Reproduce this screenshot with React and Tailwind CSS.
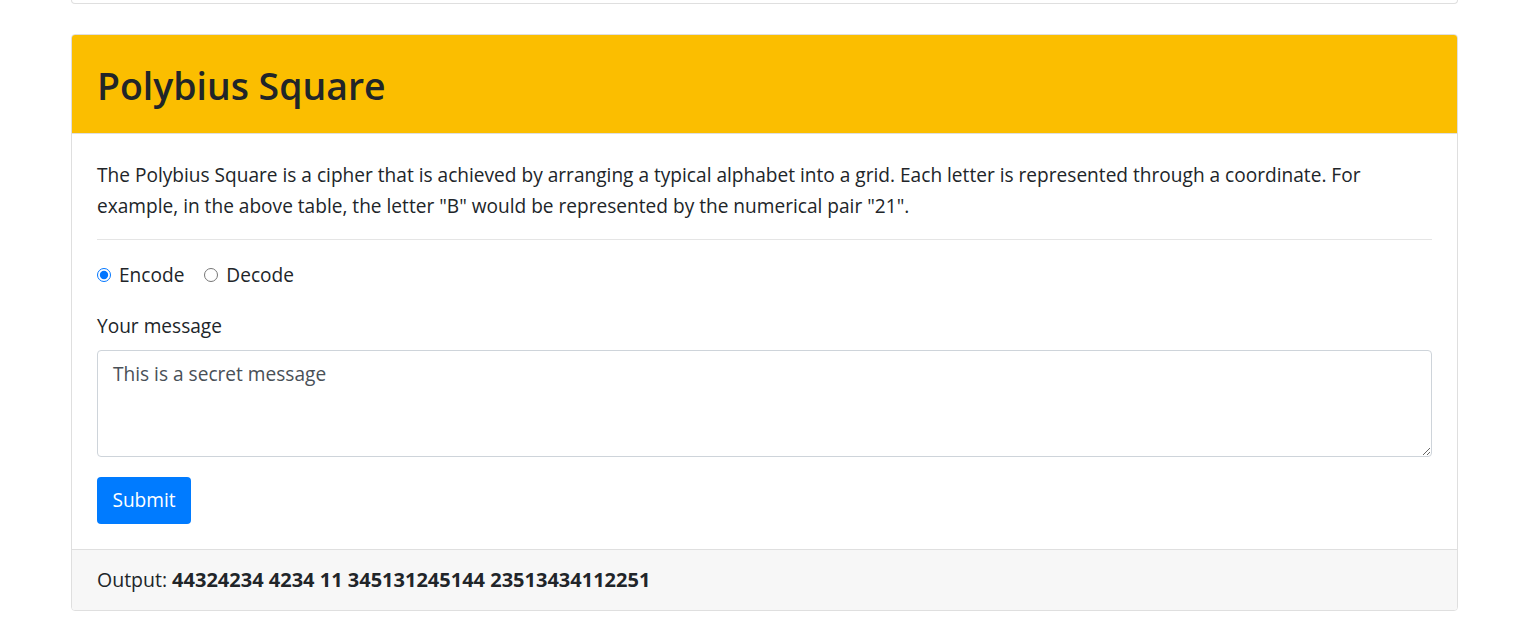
export default function App() {
  return (
    <div
      className="min-h-screen bg-white text-[#212529]"
      style={{ fontFamily: '"Open Sans", "Noto Sans", sans-serif' }}
    >
      <div className="ml-[71px] w-[1387px]">
        {/* tail of the previous card */}
        <div className="h-[4px] border border-t-0 border-[#dfdfdf] rounded-b-[4px]"></div>

        <div className="mt-[30px] border border-[#dfdfdf] rounded-[4px] overflow-hidden">
          <div className="bg-[#fbbe00] border-b border-[#dfdfdf] h-[99px] px-[25px] flex items-center">
            <h1 className="text-[37.4px] leading-[48px] font-semibold text-[#212529] pt-[3px]">
              Polybius Square
            </h1>
          </div>

          <div className="px-[25px] pt-[25px] pb-[25px] text-[19.1px]">
            <p className="leading-[31px] pt-[1px]">
              The Polybius Square is a cipher that is achieved by arranging a typical alphabet into a grid. Each letter is represented through a coordinate. For example, in the above table, the letter "B" would be represented by the numerical pair "21".
            </p>
            <hr className="mt-[17px] border-[#e5e5e5]" />

            <div className="mt-[20px] flex items-center h-[30px] gap-[20px]">
              <label className="flex items-center gap-[8px]">
                <input type="radio" name="mode" defaultChecked className="w-[14px] h-[14px] accent-[#0075ff]" />
                <span>Encode</span>
              </label>
              <label className="flex items-center gap-[8px]">
                <input type="radio" name="mode" className="w-[14px] h-[14px]" />
                <span>Decode</span>
              </label>
            </div>

            <div className="mt-[21px] leading-[30px]">Your message</div>
            <textarea
              defaultValue="This is a secret message"
              className="mt-[9px] block w-full h-[107px] border border-[#ced4da] rounded-[4px] px-[15px] py-[8px] text-[#495057] leading-[30px] outline-none"
            />

            <button className="mt-[20px] h-[47px] w-[94px] bg-[#007bff] text-white rounded-[4px]">
              Submit
            </button>
          </div>

          <div className="bg-[#f7f7f7] border-t border-[#dfdfdf] px-[25px] py-[15px] leading-[30px] text-[19.5px]">
            Output: <span className="font-bold text-[20px]">44324234 4234 11 345131245144 23513434112251</span>
          </div>
        </div>
      </div>
    </div>
  );
}
